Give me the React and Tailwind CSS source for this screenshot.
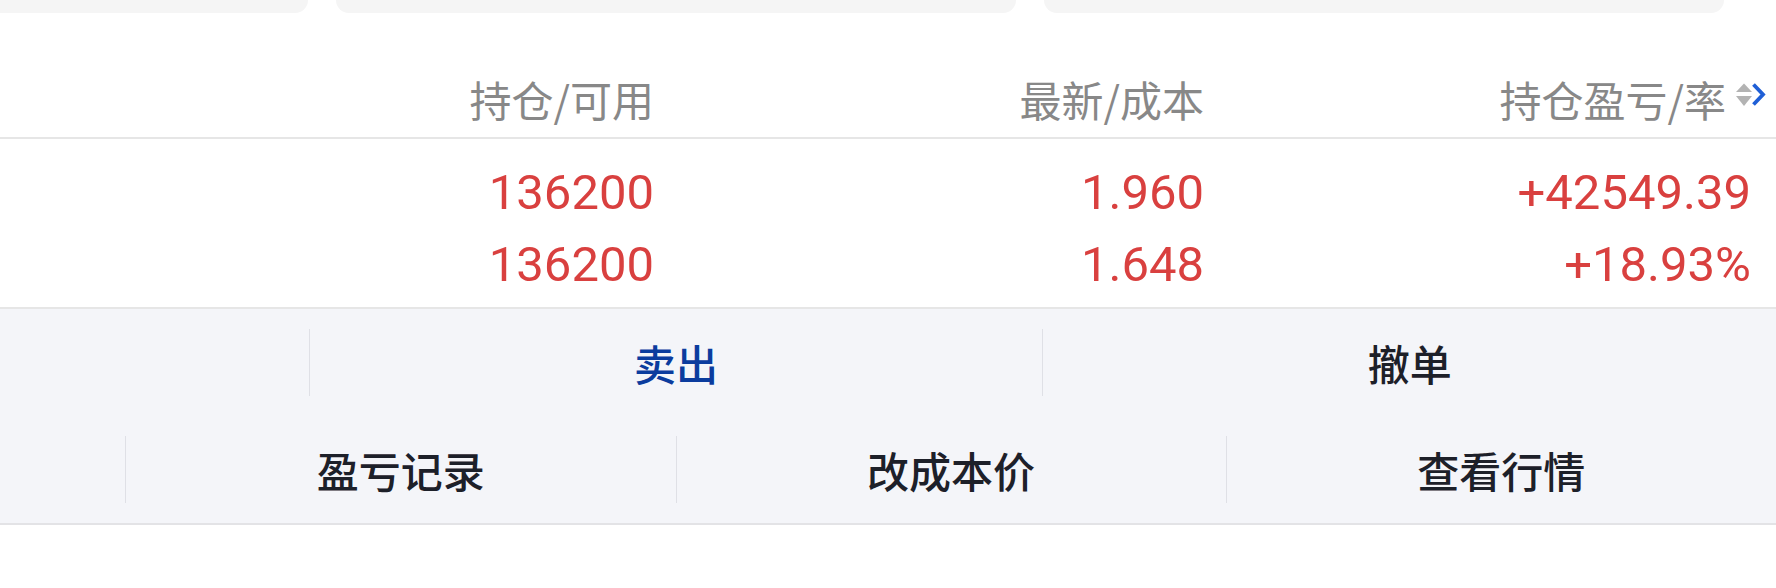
import React from "react";

const CJK = { fontFamily: '"Noto Sans CJK SC", "Noto Sans", sans-serif' };
const NUM = { fontFamily: 'Roboto, "Noto Sans", sans-serif' };

function SortIcon() {
  return (
    <svg width="32" height="26" viewBox="0 0 32 26" className="shrink-0 mb-[8px]">
      <polygon points="0,10 8,1.5 16,10" fill="#b3b3b3" />
      <polygon points="0,14 8,24 16,14" fill="#b3b3b3" />
      <polyline
        points="17.5,2.5 27,12.5 17.5,22.5"
        fill="none"
        stroke="#1f5fd6"
        strokeWidth="3.8"
        strokeLinejoin="miter"
      />
    </svg>
  );
}

function Divider() {
  return <div className="w-px h-[67px] shrink-0 bg-[#dfe0e6]" />;
}

export default function App() {
  const headCell =
    "flex items-center justify-end h-[77px] text-[42px] leading-none text-[#888888]";
  const numCell =
    "flex items-center justify-end h-[72px] text-[49px] leading-none text-[#d9403f]";
  const actionText = "text-[42px] leading-none font-medium";

  return (
    <div className="w-[1776px] h-[588px] overflow-hidden bg-white">
      <div className="w-[2200px] ml-[-424px]">
        {/* top cards (bottom edges) */}
        <div className="grid grid-cols-3 gap-[28px] px-[52px]">
          <div className="h-[13px] bg-[#f5f5f5] rounded-b-[13px]" />
          <div className="h-[13px] bg-[#f5f5f5] rounded-b-[13px]" />
          <div className="h-[13px] bg-[#f5f5f5] rounded-b-[13px]" />
        </div>

        {/* header */}
        <div className="grid grid-cols-4 h-[126px] pt-[47px] border-b-2 border-[#e6e6e6]">
          <div />
          <div className={headCell + " pr-[22px]"} style={CJK}>
            持仓/可用
          </div>
          <div className={headCell + " pr-[22px]"} style={CJK}>
            最新/成本
          </div>
          <div className={headCell + " pr-[8px] gap-[10px]"} style={CJK}>
            <span>持仓盈亏/率</span>
            <SortIcon />
          </div>
        </div>

        {/* data */}
        <div className="grid grid-cols-4 h-[170px] pt-[17px] border-b-2 border-[#e6e6e6]">
          <div />
          <div className="flex flex-col pr-[22px]" style={NUM}>
            <div className={numCell}>136200</div>
            <div className={numCell}>136200</div>
          </div>
          <div className="flex flex-col pr-[22px]" style={NUM}>
            <div className={numCell}>1.960</div>
            <div className={numCell}>1.648</div>
          </div>
          <div className="flex flex-col pr-[25px]" style={NUM}>
            <div className={numCell}>+42549.39</div>
            <div className={numCell}>+18.93%</div>
          </div>
        </div>

        {/* actions */}
        <div className="bg-[#f4f5f9] border-b-2 border-[#e3e3e6]" style={CJK}>
          <div className="flex items-center h-[107px]">
            <div className="flex-1" />
            <Divider />
            <div className="flex-1 flex justify-center">
              <span className={actionText + " text-[#0b3c9e]"}>卖出</span>
            </div>
            <Divider />
            <div className="flex-1 flex justify-center">
              <span className={actionText + " text-[#1d2029]"}>撤单</span>
            </div>
          </div>
          <div className="flex items-center h-[107px]">
            <div className="flex-1" />
            <Divider />
            <div className="flex-1 flex justify-center">
              <span className={actionText + " text-[#1d2029]"}>盈亏记录</span>
            </div>
            <Divider />
            <div className="flex-1 flex justify-center">
              <span className={actionText + " text-[#1d2029]"}>改成本价</span>
            </div>
            <Divider />
            <div className="flex-1 flex justify-center">
              <span className={actionText + " text-[#1d2029]"}>查看行情</span>
            </div>
          </div>
        </div>
      </div>
    </div>
  );
}
